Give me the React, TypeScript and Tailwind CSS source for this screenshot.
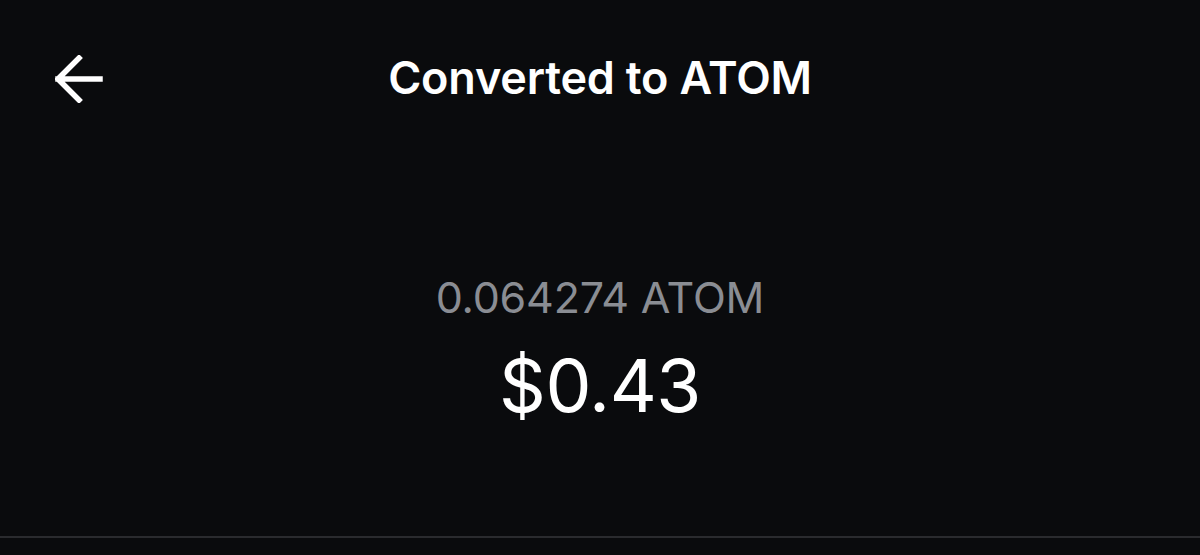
export default function App() {
  return (
    <div className="flex h-[555px] w-full flex-col bg-[#0a0b0d] font-['Inter',sans-serif] text-white">
      {/* Header */}
      <header className="relative flex h-[156px] items-center justify-center">
        <button className="absolute left-[55px] top-[55px] flex h-[48px] w-[48px] items-center justify-center text-white">
          <svg width="48" height="48" viewBox="0 0 48 48" fill="none">
            <path
              d="M24 3 L3 24 L24 45 M3 24 H45"
              stroke="currentColor"
              strokeWidth="5.5"
              strokeLinecap="square"
              strokeLinejoin="miter"
            />
          </svg>
        </button>
        <h1 className="text-[45px] leading-[52px] font-semibold tracking-[-0.2px]">Converted to ATOM</h1>
      </header>

      {/* Amount */}
      <main className="flex flex-1 flex-col items-center pt-[116px]">
        <p className="text-[43px] leading-[50px] font-normal tracking-[-0.2px] text-[#8a8d93]">0.064274 ATOM</p>
        <p className="mt-[22px] text-[73px] leading-[84px] font-normal tracking-[-0.5px]">$0.43</p>
      </main>

      <div className="mb-[17px] h-[2px] w-full bg-[#2a2b2e]" />
    </div>
  );
}
